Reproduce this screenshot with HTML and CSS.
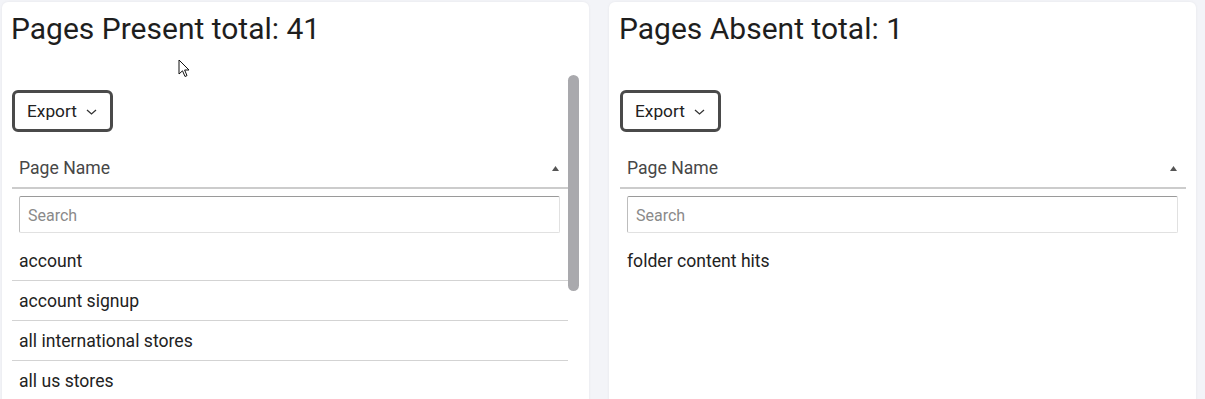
FILE: index.html
```html
<!DOCTYPE html>
<html>
<head>
<meta charset="utf-8">
<link rel="stylesheet" href="styles.css">
</head>
<body>
<div class="board">
  <section class="card">
    <h2 class="card-title">Pages Present total: 41</h2>
    <div class="scroll">
      <div class="scroll-body">
        <button class="export">Export
          <svg class="chev" width="11" height="6" viewBox="0 0 11 6"><path d="M1 1 L5.5 5 L10 1" fill="none" stroke="#333" stroke-width="1.3"/></svg>
        </button>
        <div class="table">
          <div class="thead">
            <span>Page Name</span>
            <svg class="sort" width="7" height="5" viewBox="0 0 7 5"><path d="M0 5 L3.5 0 L7 5 Z" fill="#555"/></svg>
          </div>
          <div class="search-wrap"><input class="search" placeholder="Search"></div>
          <div class="row">account</div>
          <div class="row">account signup</div>
          <div class="row">all international stores</div>
          <div class="row">all us stores</div>
        </div>
      </div>
      <div class="scrollbar"><div class="thumb"></div></div>
    </div>
    <svg class="cursor" width="12" height="19" viewBox="0 0 12 19"><path d="M1 1 L1 15 L4.5 11.8 L7 17.5 L9 16.6 L6.6 11 L11 11 Z" fill="#fff" stroke="#111" stroke-width="1" stroke-linejoin="round"/></svg>
  </section>
  <section class="card card-right">
    <h2 class="card-title">Pages Absent total: 1</h2>
    <div class="scroll">
      <div class="scroll-body">
        <button class="export">Export
          <svg class="chev" width="11" height="6" viewBox="0 0 11 6"><path d="M1 1 L5.5 5 L10 1" fill="none" stroke="#333" stroke-width="1.3"/></svg>
        </button>
        <div class="table">
          <div class="thead">
            <span>Page Name</span>
            <svg class="sort" width="7" height="5" viewBox="0 0 7 5"><path d="M0 5 L3.5 0 L7 5 Z" fill="#555"/></svg>
          </div>
          <div class="search-wrap"><input class="search" placeholder="Search"></div>
          <div class="row row-last">folder content hits</div>
        </div>
      </div>
    </div>
  </section>
</div>
</body>
</html>
```
FILE: styles.css
```css
html, body {
  margin: 0;
  padding: 0;
  height: 100%;
  overflow: hidden;
  background: #f3f4f8;
  font-family: Roboto, "Liberation Sans", sans-serif;
  color: #212121;
}
.board {
  display: grid;
  grid-template-columns: 587px 587px;
  column-gap: 20px;
  padding: 2px 0 0 2px;
  height: 420px;
}
.card {
  position: relative;
  background: #fff;
  border-radius: 6px;
  box-shadow: 0 0 3px rgba(0,0,0,0.06);
  padding: 0 10px;
  display: flex;
  flex-direction: column;
  overflow: hidden;
}
.card-right {
  padding-left: 11px;
}
.card-title {
  margin: 0 0 0 -1px;
  padding-top: 9px;
  height: 73px;
  box-sizing: border-box;
  font-size: 30px;
  font-weight: 400;
  line-height: 36px;
  color: #1e1e1e;
}
.scroll {
  display: flex;
  flex: 1;
  min-height: 0;
}
.scroll-body {
  flex: 1;
  min-width: 0;
  padding-top: 15px;
}
.scrollbar {
  width: 11px;
  flex: none;
}
.thumb {
  width: 11px;
  height: 216px;
  border-radius: 6px;
  background: #a9a9ad;
}
.export {
  display: flex;
  align-items: center;
  gap: 9px;
  height: 42px;
  padding: 0 13px 0 12px;
  box-sizing: border-box;
  border: 3px solid #4a4a4a;
  border-radius: 6px;
  background: #fff;
  font-family: Roboto, "Liberation Sans", sans-serif;
  font-size: 17.3px;
  color: #222;
  cursor: pointer;
}
.chev {
  display: block;
  margin-top: 1px;
}
.thead {
  display: flex;
  align-items: center;
  justify-content: space-between;
  height: 43px;
  margin-top: 14px;
  padding: 2px 9px 0 7px;
  box-sizing: border-box;
  border-bottom: 2px solid #cccccc;
  font-size: 17.6px;
  color: #474747;
}
.sort {
  display: block;
  margin-top: 2px;
}
.search-wrap {
  padding: 7px 8px 8px 7px;
}
.search {
  display: block;
  width: 100%;
  height: 37px;
  box-sizing: border-box;
  border: 1px solid #e1e1e1;
  border-top-color: #9a9a9a;
  border-left-color: #bdbdbd;
  border-radius: 2px;
  padding: 1px 8px 0;
  font-family: Roboto, "Liberation Sans", sans-serif;
  font-size: 16px;
  color: #333;
  outline: none;
}
.search::placeholder {
  color: #8a8a8a;
}
.row {
  height: 40px;
  line-height: 37px;
  padding: 2px 0 0 7px;
  box-sizing: border-box;
  border-bottom: 1px solid #d3d3d3;
  font-size: 17.6px;
  color: #222;
}
.row-last {
  border-bottom: none;
}
.cursor {
  position: absolute;
  left: 176px;
  top: 57px;
}
```
